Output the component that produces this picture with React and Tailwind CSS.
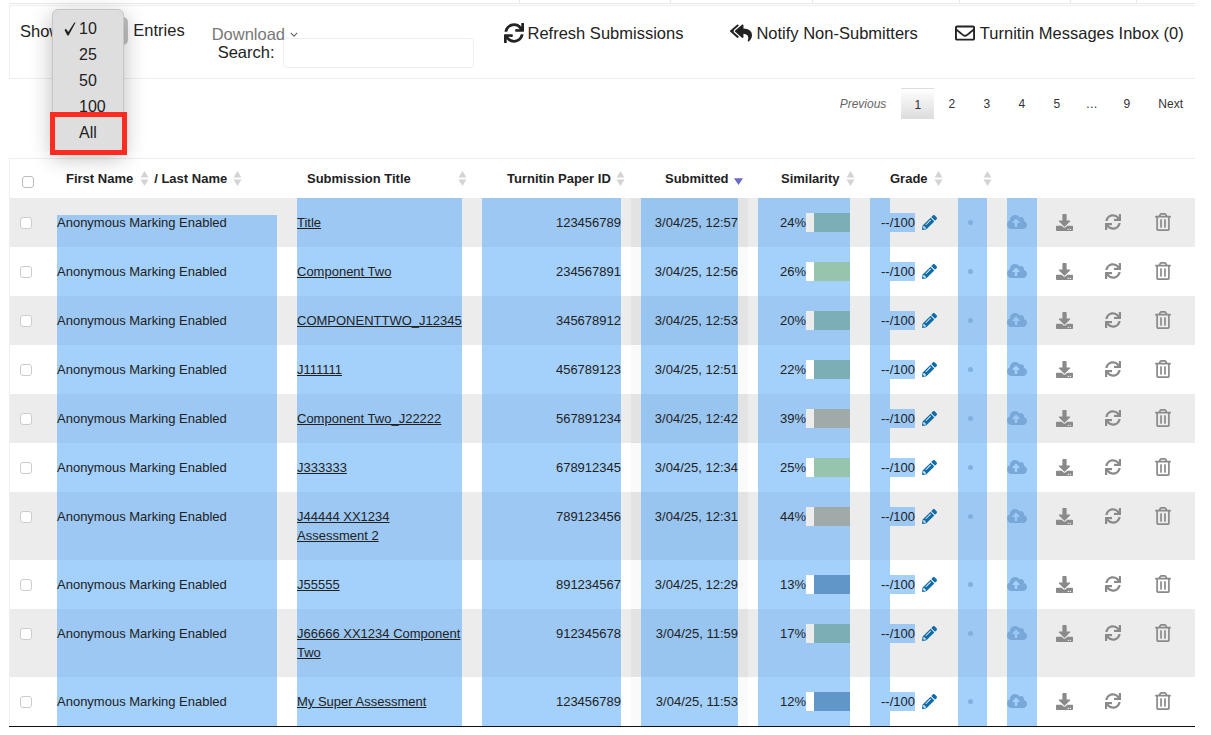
import React from 'react';
import { FaSync, FaReplyAll, FaRegEnvelope, FaPencilAlt, FaCloudUploadAlt, FaDownload, FaRegTrashAlt } from 'react-icons/fa';

const TEAL = 'bg-[#7cafb5]';
const GREEN = 'bg-[#96c4ad]';
const GREY = 'bg-[#a0aaa8]';
const BLUE = 'bg-[#6197c8]';

const rows = [
    { title: 'Title', id: '123456789', date: '3/04/25, 12:57', sim: '24%', bar: TEAL },
    { title: 'Component Two', id: '234567891', date: '3/04/25, 12:56', sim: '26%', bar: GREEN },
    { title: 'COMPONENTTWO_J12345', id: '345678912', date: '3/04/25, 12:53', sim: '20%', bar: TEAL },
    { title: 'J111111', id: '456789123', date: '3/04/25, 12:51', sim: '22%', bar: TEAL },
    { title: 'Component Two_J22222', id: '567891234', date: '3/04/25, 12:42', sim: '39%', bar: GREY },
    { title: 'J333333', id: '678912345', date: '3/04/25, 12:34', sim: '25%', bar: GREEN },
    { title: 'J44444 XX1234 Assessment 2', id: '789123456', date: '3/04/25, 12:31', sim: '44%', bar: GREY },
    { title: 'J55555', id: '891234567', date: '3/04/25, 12:29', sim: '13%', bar: BLUE },
    { title: 'J66666 XX1234 Component Two', id: '912345678', date: '3/04/25, 11:59', sim: '17%', bar: TEAL },
    { title: 'My Super Assessment', id: '123456789', date: '3/04/25, 11:53', sim: '12%', bar: BLUE },
];

function SortArrows({ className = '' }) {
    return (
        <svg viewBox="0 0 8 15" className={`w-[9px] h-[15px] shrink-0 ${className}`} fill="#d4d4d4">
            <path d="M4 0 L8 6.4 H0 Z" />
            <path d="M4 15 L8 8.6 H0 Z" />
        </svg>
    );
}

function Row({ row, index }) {
    const odd = index % 2 === 0;
    const hl = odd ? 'bg-[#9dc8f4]' : 'bg-[#a4d0fc]';
    const hlDark = odd ? 'bg-[#98c4f0]' : 'bg-[#a3cffb]';
    const rowBg = odd ? 'bg-[#ececec]' : 'bg-white';
    const sortBg = odd ? 'bg-[#e3e3e3]' : 'bg-[#fafafa]';

    return (
        <div className={`flex text-[13px] leading-[19px] text-[#222] ${rowBg}`}>
            <div className="w-[47px] shrink-0 pl-[10px] pt-[19px]">
                <div className="w-[12px] h-[12px] rounded-[3px] border border-[#ccc] bg-white" />
            </div>
            <div className={`w-[220px] shrink-0 ${index === 0 ? 'mt-[17px]' : ''} ${hl}`}>
                <div className={`whitespace-nowrap ${index === 0 ? '-mt-[2px]' : 'pt-[15px]'}`}>Anonymous Marking Enabled</div>
            </div>
            <div className="w-[20px] shrink-0" />
            <div className={`w-[165px] shrink-0 pt-[15px] pb-[15px] ${hl}`}>
                <a className="underline">{row.title}</a>
            </div>
            <div className="w-[20px] shrink-0" />
            <div className={`w-[139px] shrink-0 pt-[15px] text-right ${hl}`}>{row.id}</div>
            <div className="w-[10px] shrink-0" />
            <div className={`w-[10px] shrink-0 ${sortBg}`} />
            <div className={`w-[97px] shrink-0 pt-[15px] text-right whitespace-nowrap ${hlDark}`}>{row.date}</div>
            <div className={`w-[10px] shrink-0 ${sortBg}`} />
            <div className="w-[10px] shrink-0" />
            <div className={`w-[92px] shrink-0 pt-[15px] flex items-start ${hl}`}>
                <span className="flex-1 text-right">{row.sim}</span>
                <span className={`w-[8px] h-[19px] ${rowBg}`} />
                <span className={`w-[36px] h-[19px] ${row.bar}`} />
            </div>
            <div className="w-[20px] shrink-0" />
            <div className="w-[88px] shrink-0 flex items-stretch">
                <div className={`w-[20px] shrink-0 ${hl}`} />
                <div className="pt-[15px] flex items-start">
                    <span className={`w-[25px] h-[19px] flex justify-end whitespace-nowrap ${hl}`}>--/100</span>
                    <FaPencilAlt className="ml-[7px] mt-[2px] text-[#0f6ca8] w-[15px] h-[15px]" />
                </div>
            </div>
            <div className={`w-[29px] shrink-0 pt-[22px] pl-[10px] flex items-start ${hl}`}>
                <span className="block w-[5px] h-[5px] rounded-full bg-[#7fb0e0]" />
            </div>
            <div className="w-[20px] shrink-0" />
            <div className={`w-[30px] shrink-0 pt-[14px] flex items-start ${hl}`}>
                <FaCloudUploadAlt className="w-[20px] h-[20px] text-[#78a8d8]" />
            </div>
            <div className="flex items-start pt-[16px] text-[#8a8a8a]">
                <FaDownload className="ml-[19px] w-[17px] h-[17px]" />
                <FaSync className="ml-[32px] w-[16px] h-[16px]" />
                <FaRegTrashAlt className="ml-[34px] w-[16px] h-[18px] -mt-[1px]" />
            </div>
        </div>
    );
}

export default function App() {
    const pageCell = 'w-[35px] text-center';

    return (
        <div className="relative w-[1211px] h-[735px] overflow-hidden bg-white text-[#222] font-['Liberation_Sans',Arial,sans-serif]">
            <div className="ml-[9px] w-[1186px]">
                {/* leftovers of the table above */}
                <div className="h-[4px] border-b border-[#e8e8e8] flex">
                    <span className="ml-[510px] w-px bg-[#e8e8e8]" />
                    <span className="ml-[150px] w-px bg-[#e8e8e8]" />
                    <span className="ml-[141px] w-px bg-[#e8e8e8]" />
                    <span className="ml-[146px] w-px bg-[#e8e8e8]" />
                    <span className="ml-[110px] w-px bg-[#e8e8e8]" />
                    <span className="ml-[65px] w-px bg-[#e8e8e8]" />
                </div>

                {/* toolbar */}
                <div className="mt-[1px] h-[74px] border-t border-b border-l border-[#eee] flex items-start pl-[10px] pt-[11px] text-[16.5px]">
                    <div className="flex items-center h-[28px]">
                        <span>Show</span>
                        <span className="ml-[2px] w-[65px] h-[28px] rounded-[5px] bg-[#c4c4c4]" />
                        <span className="ml-[5px] -mt-[2px]">Entries</span>
                    </div>
                    <div className="ml-[27px] pt-[8px]">
                        <div className="h-[18px] leading-[18px] text-[#777] flex items-center">
                            Download
                            <svg viewBox="0 0 10 6" className="ml-[5px] w-[8px] h-[5px]" fill="none" stroke="#666" strokeWidth="1.4">
                                <path d="M1 1 L5 5 L9 1" />
                            </svg>
                        </div>
                        <div className="-mt-[5px] ml-[6px] flex items-center">
                            <span className="-mt-[2px]">Search:</span>
                            <span className="ml-[8px] w-[191px] h-[30px] rounded-[4px] border border-[#eee] bg-white" />
                        </div>
                    </div>
                    <div className="ml-[30px] mt-[6px] h-[20px] flex items-center text-[#222]">
                        <FaSync className="w-[20px] h-[20px]" />
                        <span className="ml-[4px]">Refresh Submissions</span>
                    </div>
                    <div className="ml-[47px] mt-[6px] h-[20px] flex items-center">
                        <FaReplyAll className="w-[22px] h-[20px]" />
                        <span className="ml-[4px]">Notify Non-Submitters</span>
                    </div>
                    <div className="ml-[36px] mt-[6px] h-[20px] flex items-center">
                        <FaRegEnvelope className="w-[22px] h-[20px]" />
                        <span className="ml-[4px] whitespace-nowrap">Turnitin Messages Inbox (0)</span>
                    </div>
                </div>

                {/* pagination */}
                <div className="h-[79px] pt-[9px] pr-[12px] flex justify-end items-start text-[12px] leading-[33px] text-[#333]">
                    <span className="h-[31px] italic text-[#666] mr-[15px]">Previous</span>
                    <span className="w-[33px] h-[31px] text-center border-t border-[#ddd] bg-gradient-to-b from-white to-[#dcdcdc]">1</span>
                    {['2', '3', '4', '5', '…', '9'].map(p => (
                        <span key={p} className={`${pageCell} h-[31px]`}>{p}</span>
                    ))}
                    <span className="ml-[14px] h-[31px]">Next</span>
                </div>

                {/* table */}
                <div className="border-t border-l border-[#eee]">
                    <div className="h-[39px] flex items-center text-[13px] font-bold text-[#222]">
                        <div className="w-[47px] shrink-0 pl-[12px] pt-[6px]">
                            <div className="w-[12px] h-[12px] rounded-[3px] border border-[#bbb] bg-white" />
                        </div>
                        <div className="w-[240px] shrink-0 pl-[9px] flex items-center">
                            <span>First Name</span>
                            <SortArrows className="ml-[7px]" />
                            <span className="ml-[5px]">/ Last Name</span>
                            <SortArrows className="ml-[6px]" />
                        </div>
                        <div className="w-[185px] shrink-0 pl-[10px] pr-[15px] flex items-center justify-between">
                            <span>Submission Title</span>
                            <SortArrows />
                        </div>
                        <div className="w-[149px] shrink-0 pl-[25px] flex items-center">
                            <span className="whitespace-nowrap">Turnitin Paper ID</span>
                            <SortArrows className="ml-[5px]" />
                        </div>
                        <div className="w-[127px] shrink-0 pl-[34px] flex items-center">
                            <span>Submitted</span>
                            <svg viewBox="0 0 8 6" className="ml-[5px] mt-[5px] w-[9px] h-[7px]" fill="#6a6ac8">
                                <path d="M0 0 H8 L4 6 Z" />
                            </svg>
                        </div>
                        <div className="w-[112px] shrink-0 pl-[23px] flex items-center">
                            <span>Similarity</span>
                            <SortArrows className="ml-[6px]" />
                        </div>
                        <div className="w-[117px] shrink-0 pl-[20px] flex items-center">
                            <span>Grade</span>
                            <SortArrows className="ml-[6px]" />
                            <SortArrows className="ml-[40px]" />
                        </div>
                    </div>
                    {rows.map((row, i) => (
                        <Row key={i} row={row} index={i} />
                    ))}
                    <div className="h-px bg-[#111] -ml-px" />
                </div>
            </div>

            {/* native select popup */}
            <div className="absolute left-[52px] top-[9px] w-[72px] h-[142px] rounded-[6px] bg-[#dedede] border border-[#c6c6c6] shadow-[0_6px_22px_rgba(0,0,0,0.28)] overflow-hidden pt-[6px] text-[16px] text-[#222]">
                {['10', '25', '50', '100', 'All'].map((opt, i) => (
                    <div key={opt} className="relative h-[26px] leading-[26px] pl-[26px]">
                        {i === 0 && (
                            <svg viewBox="0 0 12 14" className="absolute left-[11px] top-[6px] w-[12px] h-[14px]" fill="#222">
                                <path d="M0.5 8 L2 6.8 L4.2 10 L10.4 0.5 L11.6 0.5 L4.6 13.5 L3.4 13.5 Z" />
                            </svg>
                        )}
                        {opt}
                    </div>
                ))}
            </div>
            <div className="absolute left-[50px] top-[112px] w-[77px] h-[43px] border-[5px] border-[#ff2a20]" />
        </div>
    );
}
